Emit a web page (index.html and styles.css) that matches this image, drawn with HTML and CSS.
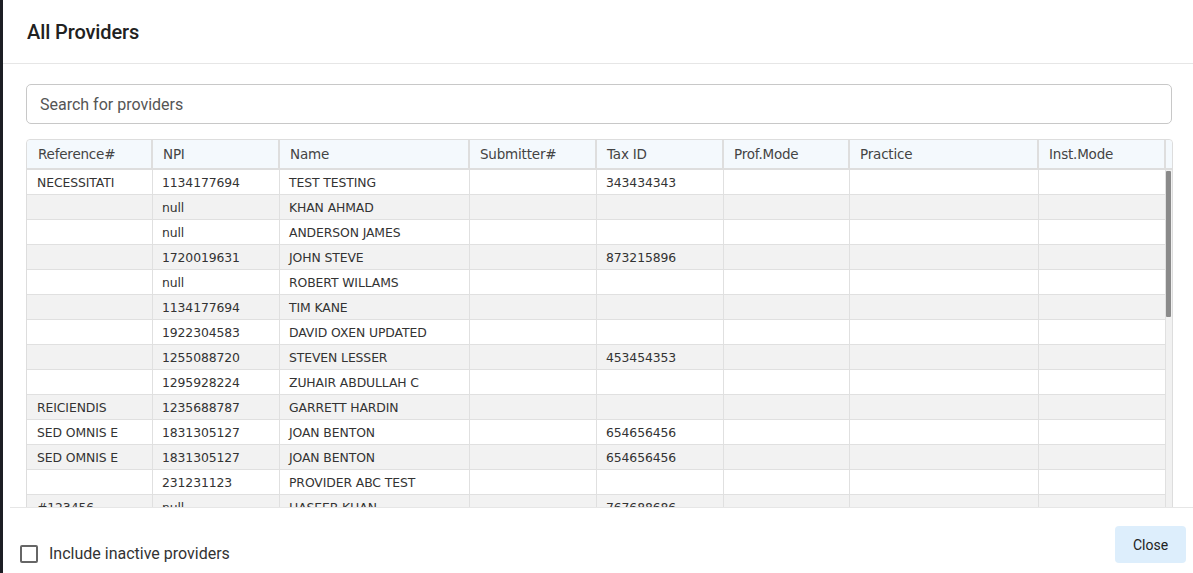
FILE: index.html
```html
<!DOCTYPE html>
<html>
<head>
<meta charset="utf-8">
<link rel="stylesheet" href="styles.css">
</head>
<body>
<div class="modal">
  <div class="modal-header"><h1 class="title">All Providers</h1></div>
  <div class="modal-body">
    <div class="search">Search for providers</div>
    <div class="grid">
      <div class="grid-head">
        <div class="hcell">Reference#</div>
        <div class="hcell">NPI</div>
        <div class="hcell">Name</div>
        <div class="hcell">Submitter#</div>
        <div class="hcell">Tax ID</div>
        <div class="hcell">Prof.Mode</div>
        <div class="hcell">Practice</div>
        <div class="hcell">Inst.Mode</div>
        <div class="hfill"></div>
      </div>
      <div class="grid-body">
        <div class="rows">
          <div class="row"><div class="cell">NECESSITATI</div><div class="cell">1134177694</div><div class="cell">TEST TESTING</div><div class="cell"></div><div class="cell">343434343</div><div class="cell"></div><div class="cell"></div><div class="cell"></div></div>
          <div class="row"><div class="cell"></div><div class="cell">null</div><div class="cell">KHAN AHMAD</div><div class="cell"></div><div class="cell"></div><div class="cell"></div><div class="cell"></div><div class="cell"></div></div>
          <div class="row"><div class="cell"></div><div class="cell">null</div><div class="cell">ANDERSON JAMES</div><div class="cell"></div><div class="cell"></div><div class="cell"></div><div class="cell"></div><div class="cell"></div></div>
          <div class="row"><div class="cell"></div><div class="cell">1720019631</div><div class="cell">JOHN STEVE</div><div class="cell"></div><div class="cell">873215896</div><div class="cell"></div><div class="cell"></div><div class="cell"></div></div>
          <div class="row"><div class="cell"></div><div class="cell">null</div><div class="cell">ROBERT WILLAMS</div><div class="cell"></div><div class="cell"></div><div class="cell"></div><div class="cell"></div><div class="cell"></div></div>
          <div class="row"><div class="cell"></div><div class="cell">1134177694</div><div class="cell">TIM KANE</div><div class="cell"></div><div class="cell"></div><div class="cell"></div><div class="cell"></div><div class="cell"></div></div>
          <div class="row"><div class="cell"></div><div class="cell">1922304583</div><div class="cell">DAVID OXEN UPDATED</div><div class="cell"></div><div class="cell"></div><div class="cell"></div><div class="cell"></div><div class="cell"></div></div>
          <div class="row"><div class="cell"></div><div class="cell">1255088720</div><div class="cell">STEVEN LESSER</div><div class="cell"></div><div class="cell">453454353</div><div class="cell"></div><div class="cell"></div><div class="cell"></div></div>
          <div class="row"><div class="cell"></div><div class="cell">1295928224</div><div class="cell">ZUHAIR ABDULLAH C</div><div class="cell"></div><div class="cell"></div><div class="cell"></div><div class="cell"></div><div class="cell"></div></div>
          <div class="row"><div class="cell">REICIENDIS</div><div class="cell">1235688787</div><div class="cell">GARRETT HARDIN</div><div class="cell"></div><div class="cell"></div><div class="cell"></div><div class="cell"></div><div class="cell"></div></div>
          <div class="row"><div class="cell">SED OMNIS E</div><div class="cell">1831305127</div><div class="cell">JOAN BENTON</div><div class="cell"></div><div class="cell">654656456</div><div class="cell"></div><div class="cell"></div><div class="cell"></div></div>
          <div class="row"><div class="cell">SED OMNIS E</div><div class="cell">1831305127</div><div class="cell">JOAN BENTON</div><div class="cell"></div><div class="cell">654656456</div><div class="cell"></div><div class="cell"></div><div class="cell"></div></div>
          <div class="row"><div class="cell"></div><div class="cell">231231123</div><div class="cell">PROVIDER ABC TEST</div><div class="cell"></div><div class="cell"></div><div class="cell"></div><div class="cell"></div><div class="cell"></div></div>
          <div class="row"><div class="cell">#123456</div><div class="cell">null</div><div class="cell">HASEEB KHAN</div><div class="cell"></div><div class="cell">767688686</div><div class="cell"></div><div class="cell"></div><div class="cell"></div></div>
          <div class="row"><div class="cell"></div><div class="cell">null</div><div class="cell">MARK SMITH</div><div class="cell"></div><div class="cell"></div><div class="cell"></div><div class="cell"></div><div class="cell"></div></div>
        </div>
        <div class="track"><div class="thumb"></div></div>
      </div>
    </div>
  </div>
  <div class="modal-footer">
    <label class="check"><span class="box"></span><span class="check-label">Include inactive providers</span></label>
    <button class="btn-close">Close</button>
  </div>
</div>
</body>
</html>
```

FILE: styles.css
```css
html, body {
  margin: 0;
  padding: 0;
  height: 100%;
}
body {
  background: #1c1e24;
  font-family: Roboto, "Liberation Sans", sans-serif;
  overflow: hidden;
}
.modal {
  margin-left: 3px;
  height: 573px;
  background: #fff;
  display: flex;
  flex-direction: column;
}
.modal-header {
  height: 63px;
  border-bottom: 1px solid #e6e6e6;
  display: flex;
  align-items: center;
  padding-left: 24px;
  flex-shrink: 0;
}
.title {
  margin: 0;
  font-size: 20px;
  font-weight: 500;
  color: #212121;
  letter-spacing: -0.1px;
}
.modal-body {
  height: 443px;
  overflow: hidden;
  padding: 20px 0 0 23px;
  box-sizing: border-box;
  flex-shrink: 0;
}
.search {
  width: 1146px;
  height: 40px;
  box-sizing: border-box;
  border: 1px solid #c8c8c8;
  border-radius: 5px;
  padding-left: 13px;
  display: flex;
  align-items: center;
  font-size: 16px;
  color: #555;
}
.grid {
  margin-top: 15px;
  width: 1147px;
  box-sizing: border-box;
  border: 1px solid #dddddd;
  border-radius: 4px 4px 0 0;
  font-family: "DejaVu Sans", sans-serif;
  color: #333;
}
.grid-head {
  display: grid;
  grid-template-columns: 126px 127px 190px 127px 127px 126px 189px 127px 6px;
  height: 28px;
  background: #f4f9fd;
  border-bottom: 2px solid #dedede;
  border-radius: 4px 4px 0 0;
}
.hcell {
  border-right: 2px solid #dedede;
  padding-left: 10px;
  display: flex;
  align-items: center;
  font-size: 13.5px;
  color: #444;
  letter-spacing: -0.2px;
}
.hcell:first-child { padding-left: 11px; }
.grid-body {
  display: flex;
}
.rows {
  width: 1139px;
}
.row {
  display: grid;
  grid-template-columns: 126px 127px 190px 127px 127px 126px 189px 127px;
  height: 25px;
  box-sizing: border-box;
  border-bottom: 1px solid #e0e0e0;
}
.row:nth-child(even) { background: #f2f2f2; }
.cell {
  border-right: 1px solid #e0e0e0;
  padding-left: 9px;
  display: flex;
  align-items: center;
  font-size: 12.4px;
  color: #333;
  letter-spacing: -0.1px;
  white-space: nowrap;
  overflow: hidden;
}
.cell:first-child { padding-left: 10px; }
.track {
  width: 6px;
  background: #f1f1f1;
  padding-top: 1px;
}
.thumb {
  width: 5px;
  height: 146px;
  background: #8a8a8a;
  border-radius: 1px;
}
.modal-footer {
  margin-left: 7px;
  border-top: 1px solid #e6e6e6;
  flex: 1;
  display: flex;
  justify-content: space-between;
  align-items: flex-start;
  padding: 18px 7px 0 10px;
}
.check {
  display: flex;
  align-items: center;
  margin-top: 18px;
}
.box {
  width: 14px;
  height: 14px;
  border: 2px solid #666;
  border-radius: 2px;
}
.check-label {
  margin-left: 11px;
  font-size: 16px;
  color: #333;
}
.btn-close {
  width: 71px;
  height: 37px;
  border: none;
  border-radius: 4px;
  background: #ddeefc;
  font-family: Roboto, "Liberation Sans", sans-serif;
  font-size: 14px;
  color: #222;
  padding: 0;
}
```
